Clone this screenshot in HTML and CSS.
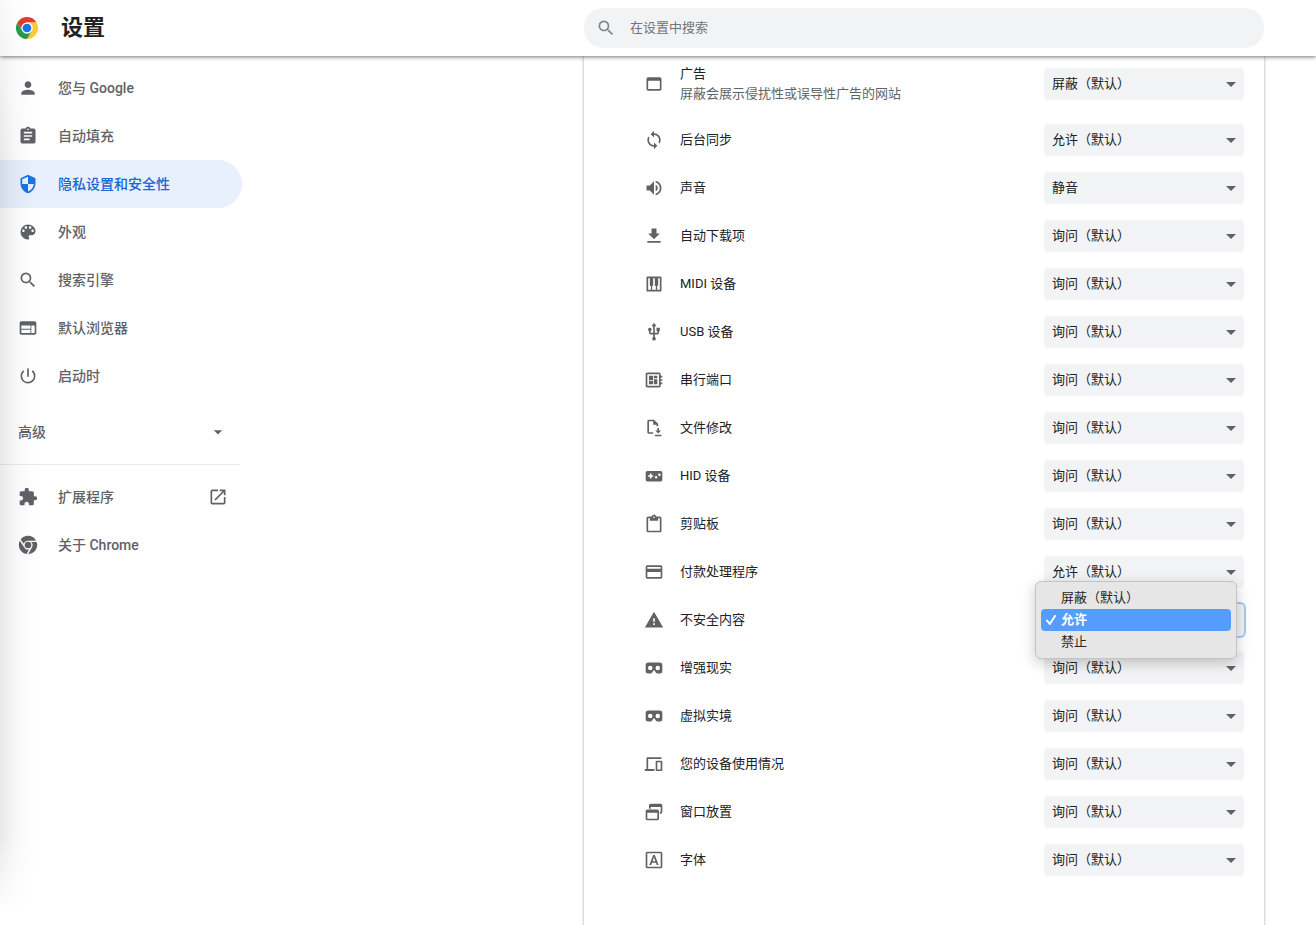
FILE: index.html
```html
<!DOCTYPE html>
<html lang="zh-CN">
<head>
<meta charset="utf-8">
<title>设置</title>
<link rel="stylesheet" href="styles.css">
</head>
<body>
<header class="toolbar">
  <div class="brand">
    <svg class="logo" viewBox="0 0 48 48" aria-hidden="true">
      <path fill="#e33b2e" d="M3.2 12A24 24 0 0 1 44.8 12H24a12 12 0 0 0-10.4 18z"/>
      <path fill="#fcc934" d="M44.8 12A24 24 0 0 1 24 48l10.4-18A12 12 0 0 0 24 12z"/>
      <path fill="#2a9a48" d="M24 48A24 24 0 0 1 3.2 12l10.4 18A12 12 0 0 0 34.4 30z"/>
      <circle cx="24" cy="24" r="12" fill="#fff"/>
      <circle cx="24" cy="24" r="9.5" fill="#1a73e8"/>
    </svg>
    <h1 class="title">设置</h1>
  </div>
  <label class="search">
    <svg class="icon" viewBox="0 0 24 24" aria-hidden="true"><path d="M15.5 14h-.79l-.28-.27A6.47 6.47 0 0 0 16 9.5 6.5 6.5 0 1 0 9.5 16c1.61 0 3.09-.59 4.23-1.57l.27.28v.79l5 4.99L20.49 19l-4.99-5zm-6 0C7.01 14 5 11.99 5 9.5S7.01 5 9.5 5 14 7.01 14 9.5 11.99 14 9.5 14z"/></svg>
    <input class="search-input" type="search" placeholder="在设置中搜索" aria-label="在设置中搜索">
  </label>
</header>

<div class="layout">
  <nav class="sidebar" aria-label="设置">
    <a class="nav-item" href="#people"><svg class="icon" viewBox="0 0 24 24"><path d="M12 12c2.21 0 4-1.79 4-4s-1.79-4-4-4-4 1.79-4 4 1.79 4 4 4zm0 2c-2.67 0-8 1.34-8 4v2h16v-2c0-2.66-5.33-4-8-4z"/></svg>您与 Google</a>
    <a class="nav-item" href="#autofill"><svg class="icon" viewBox="0 0 24 24"><path d="M19 3h-4.18C14.4 1.84 13.3 1 12 1c-1.3 0-2.4.84-2.82 2H5c-1.1 0-2 .9-2 2v14c0 1.1.9 2 2 2h14c1.1 0 2-.9 2-2V5c0-1.1-.9-2-2-2zm-7 0c.55 0 1 .45 1 1s-.45 1-1 1-1-.45-1-1 .45-1 1-1zm2 14H7v-2h7v2zm3-4H7v-2h10v2zm0-4H7V7h10v2z"/></svg>自动填充</a>
    <a class="nav-item selected" href="#privacy" aria-current="page"><svg class="icon" viewBox="0 0 24 24"><path d="M12 1L3 5v6c0 5.55 3.84 10.74 9 12 5.16-1.26 9-6.45 9-12V5l-9-4zm0 10.99h7c-.53 4.12-3.28 7.79-7 8.94V12H5V6.3l7-3.11v8.8z"/></svg>隐私设置和安全性</a>
    <a class="nav-item" href="#appearance"><svg class="icon" viewBox="0 0 24 24"><path d="M12 3a9 9 0 0 0 0 18c.83 0 1.5-.67 1.5-1.5 0-.39-.15-.74-.39-1.01-.23-.26-.38-.61-.38-.99 0-.83.67-1.5 1.5-1.5H16c2.76 0 5-2.24 5-5 0-4.42-4.03-8-9-8zm-5.5 9c-.83 0-1.5-.67-1.5-1.5S5.67 9 6.500 9 8 9.670 8 10.500 7.330 12 6.500 12zm3-4C8.670 8 8 7.330 8 6.500S8.670 5 9.500 5s1.500.67 1.500 1.500S10.330 8 9.500 8zm5 0c-.83 0-1.500-.67-1.500-1.500S13.670 5 14.500 5s1.500.67 1.500 1.500S15.330 8 14.500 8zm3 4c-.83 0-1.500-.67-1.500-1.500S16.670 9 17.500 9s1.500.67 1.500 1.500-.67 1.500-1.500 1.500z"/></svg>外观</a>
    <a class="nav-item" href="#search"><svg class="icon" viewBox="0 0 24 24"><path d="M15.5 14h-.79l-.28-.27A6.47 6.47 0 0 0 16 9.5 6.5 6.5 0 1 0 9.5 16c1.61 0 3.09-.59 4.23-1.57l.27.28v.79l5 4.99L20.49 19l-4.99-5zm-6 0C7.01 14 5 11.99 5 9.5S7.01 5 9.5 5 14 7.01 14 9.5 11.99 14 9.5 14z"/></svg>搜索引擎</a>
    <a class="nav-item" href="#browser"><svg class="icon" viewBox="0 0 24 24"><path d="M20 4H4c-1.100 0-1.990.9-1.990 2L2 18c0 1.100.9 2 2 2h16c1.100 0 2-.9 2-2V6c0-1.100-.9-2-2-2zm-5 14H4v-4h11v4zm0-5H4V9h11v4zm5 5h-4V9h4v9z"/></svg>默认浏览器</a>
    <a class="nav-item" href="#startup"><svg class="icon" viewBox="0 0 24 24"><path d="M13 3h-2v10h2V3zm4.830 2.170l-1.420 1.420A6.920 6.920 0 0 1 19 12c0 3.870-3.130 7-7 7A6.995 6.995 0 0 1 7.580 6.580L6.170 5.170A8.932 8.932 0 0 0 3 12a9 9 0 0 0 18 0c0-2.740-1.230-5.180-3.170-6.830z"/></svg>启动时</a>
    <button class="advanced" type="button" aria-expanded="false">高级<svg class="icon" viewBox="0 0 24 24"><path d="M7 10l5 5 5-5z"/></svg></button>
    <hr class="divider">
    <a class="nav-item" href="#extensions"><svg class="icon" viewBox="0 0 24 24"><path d="M20.500 11H19V7c0-1.100-.9-2-2-2h-4V3.500a2.500 2.500 0 0 0-5 0V5H4c-1.100 0-1.990.9-1.990 2v3.800H3.500c1.490 0 2.700 1.210 2.700 2.700s-1.210 2.700-2.700 2.700H2V20c0 1.100.9 2 2 2h3.800v-1.500c0-1.490 1.210-2.700 2.700-2.700s2.700 1.210 2.700 2.700V22H17c1.100 0 2-.9 2-2v-4h1.500a2.500 2.500 0 0 0 0-5z"/></svg><span class="nav-label">扩展程序</span><svg class="icon" viewBox="0 0 24 24"><path d="M19 19H5V5h7V3H5a2 2 0 0 0-2 2v14a2 2 0 0 0 2 2h14c1.100 0 2-.9 2-2v-7h-2v7zM14 3v2h3.590l-9.830 9.830 1.410 1.410L19 6.410V10h2V3h-7z"/></svg></a>
    <a class="nav-item" href="#about"><svg class="icon" viewBox="0 0 24 24"><circle cx="12" cy="12" r="4"/><path d="M12 1a11 11 0 0 1 9.700 5.800H12a5.300 5.300 0 0 0-5.100 3.800L3.200 5.400A11 11 0 0 1 12 1zM2.200 7L6.900 14.200A5.300 5.300 0 0 0 13.400 17.200L10.300 22.900A11 11 0 0 1 2.200 7zM22.500 8.500A11 11 0 0 1 12.200 23L16.800 14.800A5.300 5.300 0 0 0 15.900 8.500z"/></svg>关于 Chrome</a>
  </nav>

  <main class="card">
    <div class="row row-ads">
      <svg class="icon" viewBox="0 0 24 24"><path d="M19 4H5a2 2 0 0 0-2 2v12a2 2 0 0 0 2 2h14c1.100 0 2-.9 2-2V6a2 2 0 0 0-2-2zm0 14H5V8h14v10z"/></svg>
      <label class="row-label" for="ads">广告<span class="sub">屏蔽会展示侵扰性或误导性广告的网站</span></label>
      <div class="picker"><select id="ads"><option>屏蔽（默认）</option><option>允许</option></select></div>
    </div>
    <div class="row">
      <svg class="icon" viewBox="0 0 24 24"><path d="M12 4V1L8 5l4 4V6c3.310 0 6 2.690 6 6 0 1.010-.25 1.970-.7 2.800l1.460 1.460A7.930 7.930 0 0 0 20 12c0-4.420-3.580-8-8-8zm0 14c-3.310 0-6-2.690-6-6 0-1.010.25-1.970.7-2.800L5.240 7.740A7.930 7.930 0 0 0 4 12c0 4.420 3.580 8 8 8v3l4-4-4-4v3z"/></svg>
      <label class="row-label" for="sync">后台同步</label>
      <div class="picker"><select id="sync"><option>允许（默认）</option><option>禁止</option></select></div>
    </div>
    <div class="row">
      <svg class="icon" viewBox="0 0 24 24"><path d="M3 9v6h4l5 5V4L7 9H3zm13.500 3A4.500 4.500 0 0 0 14 7.970v8.050c1.480-.73 2.500-2.250 2.500-4.020zM14 3.230v2.060c2.890.86 5 3.540 5 6.710s-2.110 5.850-5 6.710v2.060c4.010-.91 7-4.490 7-8.770s-2.990-7.860-7-8.770z"/></svg>
      <label class="row-label" for="sound">声音</label>
      <div class="picker"><select id="sound"><option>静音</option><option>允许（默认）</option></select></div>
    </div>
    <div class="row">
      <svg class="icon" viewBox="0 0 24 24"><path d="M19 9h-4V3H9v6H5l7 7 7-7zM4 18v2h16v-2H4z"/></svg>
      <label class="row-label" for="downloads">自动下载项</label>
      <div class="picker"><select id="downloads"><option>询问（默认）</option><option>禁止</option></select></div>
    </div>
    <div class="row">
      <svg class="icon" viewBox="0 0 24 24"><path d="M20 3H4a1 1 0 0 0-1 1v16a1 1 0 0 0 1 1h16a1 1 0 0 0 1-1V4a1 1 0 0 0-1-1zm-6 11.500h.25V19h-4.500v-4.500H10c.55 0 1-.45 1-1V5h2v8.500c0 .55.45 1 1 1zM5 5h2v8.500c0 .55.45 1 1 1h.25V19H5V5zm14 14h-3.250v-4.500H16c.55 0 1-.45 1-1V5h2v14z"/></svg>
      <label class="row-label" for="midi">MIDI 设备</label>
      <div class="picker"><select id="midi"><option>询问（默认）</option><option>禁止</option></select></div>
    </div>
    <div class="row">
      <svg class="icon" viewBox="0 0 24 24"><path d="M15 7v4h1v2h-3V5h2l-3-4-3 4h2v8H8v-2.070c.7-.37 1.200-1.080 1.200-1.930a2.200 2.200 0 0 0-4.400 0c0 .85.5 1.560 1.200 1.930V13a2 2 0 0 0 2 2h3v3.050c-.71.37-1.200 1.100-1.200 1.950a2.200 2.200 0 0 0 4.400 0c0-.85-.49-1.580-1.200-1.950V15h3a2 2 0 0 0 2-2v-2h1V7h-4z"/></svg>
      <label class="row-label" for="usb">USB 设备</label>
      <div class="picker"><select id="usb"><option>询问（默认）</option><option>禁止</option></select></div>
    </div>
    <div class="row">
      <svg class="icon" viewBox="0 0 24 24"><path d="M22 9V7h-2V5c0-1.100-.9-2-2-2H4c-1.100 0-2 .9-2 2v14c0 1.100.9 2 2 2h14c1.100 0 2-.9 2-2v-2h2v-2h-2v-2h2v-2h-2V9h2zm-4 10H4V5h14v14zM6 13h5v4H6v-4zm6-6h4v3h-4V7zM6 7h5v5H6V7zm6 4h4v6h-4v-6z"/></svg>
      <label class="row-label" for="serial">串行端口</label>
      <div class="picker"><select id="serial"><option>询问（默认）</option><option>禁止</option></select></div>
    </div>
    <div class="row">
      <svg class="icon" viewBox="0 0 24 24"><path d="M11 19H6a2 2 0 0 1-2-2V4a2 2 0 0 1 2-2h6l5 5v3h-2V8h-4V4H6v13h5v2zM16 12h2v3h2.500L17 18.500 13.500 15H16v-3zM13 20h8v2h-8v-2z"/></svg>
      <label class="row-label" for="files">文件修改</label>
      <div class="picker"><select id="files"><option>询问（默认）</option><option>禁止</option></select></div>
    </div>
    <div class="row">
      <svg class="icon" viewBox="0 0 24 24"><path fill-rule="evenodd" d="M20 6H4a2 2 0 0 0-2 2v8.500a2 2 0 0 0 2 2h16a2 2 0 0 0 2-2V8a2 2 0 0 0-2-2zM7 9h2v2h2v2H9v2H7v-2H5v-2h2V9zm7.500 3a1.500 1.500 0 1 1 0 3 1.500 1.500 0 0 1 0-3zm4-3a1.500 1.500 0 1 1 0 3 1.500 1.500 0 0 1 0-3z"/></svg>
      <label class="row-label" for="hid">HID 设备</label>
      <div class="picker"><select id="hid"><option>询问（默认）</option><option>禁止</option></select></div>
    </div>
    <div class="row">
      <svg class="icon" viewBox="0 0 24 24"><path d="M19 3h-4.180C14.400 1.840 13.300 1 12 1s-2.400.84-2.820 2H5c-1.100 0-2 .9-2 2v15c0 1.100.9 2 2 2h14c1.100 0 2-.9 2-2V5c0-1.100-.9-2-2-2zm-7 0c.55 0 1 .45 1 1s-.45 1-1 1-1-.45-1-1 .45-1 1-1zm7 17H5V5h2v3h10V5h2v15z"/></svg>
      <label class="row-label" for="clipboard">剪贴板</label>
      <div class="picker"><select id="clipboard"><option>询问（默认）</option><option>禁止</option></select></div>
    </div>
    <div class="row">
      <svg class="icon" viewBox="0 0 24 24"><path d="M20 4H4c-1.110 0-1.990.89-1.990 2L2 18c0 1.110.89 2 2 2h16c1.110 0 2-.89 2-2V6c0-1.110-.89-2-2-2zm0 14H4v-6h16v6zm0-10H4V6h16v2z"/></svg>
      <label class="row-label" for="payment">付款处理程序</label>
      <div class="picker"><select id="payment"><option>允许（默认）</option><option>禁止</option></select></div>
    </div>
    <div class="row">
      <svg class="icon" viewBox="0 0 24 24"><path d="M1 21h22L12 2 1 21zm12-3h-2v-2h2v2zm0-4h-2v-4h2v4z"/></svg>
      <label class="row-label" for="insecure">不安全内容</label>
      <div class="picker open">
        <select id="insecure"><option>屏蔽（默认）</option><option selected>允许</option><option>禁止</option></select>
        <div class="menu" role="listbox" aria-label="不安全内容">
          <button class="option" type="button" role="option" aria-selected="false">屏蔽（默认）</button>
          <button class="option active" type="button" role="option" aria-selected="true"><svg class="check" viewBox="0 0 10 10" aria-hidden="true"><path d="M1 5.500L3.800 9 9 1"/></svg>允许</button>
          <button class="option" type="button" role="option" aria-selected="false">禁止</button>
        </div>
      </div>
    </div>
    <div class="row">
      <svg class="icon" viewBox="0 0 24 24"><path fill-rule="evenodd" d="M19 5.500H5a3 3 0 0 0-3 3v7a3 3 0 0 0 3 3h2.800c1.200 0 2-.6 2.500-1.700l.6-1.300c.4-.9 1.800-.9 2.200 0l.6 1.300c.5 1.100 1.300 1.700 2.500 1.700H19a3 3 0 0 0 3-3v-7a3 3 0 0 0-3-3zM7.500 14.700a2.700 2.700 0 1 1 0-5.400 2.700 2.700 0 0 1 0 5.400zm9 0a2.700 2.700 0 1 1 0-5.400 2.700 2.700 0 0 1 0 5.400z"/></svg>
      <label class="row-label" for="ar">增强现实</label>
      <div class="picker"><select id="ar"><option>询问（默认）</option><option>禁止</option></select></div>
    </div>
    <div class="row">
      <svg class="icon" viewBox="0 0 24 24"><path fill-rule="evenodd" d="M19 5.500H5a3 3 0 0 0-3 3v7a3 3 0 0 0 3 3h2.800c1.200 0 2-.6 2.500-1.700l.6-1.300c.4-.9 1.800-.9 2.200 0l.6 1.300c.5 1.100 1.300 1.700 2.500 1.700H19a3 3 0 0 0 3-3v-7a3 3 0 0 0-3-3zM7.500 14.700a2.700 2.700 0 1 1 0-5.400 2.700 2.700 0 0 1 0 5.400zm9 0a2.700 2.700 0 1 1 0-5.400 2.700 2.700 0 0 1 0 5.400z"/></svg>
      <label class="row-label" for="vr">虚拟实境</label>
      <div class="picker"><select id="vr"><option>询问（默认）</option><option>禁止</option></select></div>
    </div>
    <div class="row">
      <svg class="icon" viewBox="0 0 24 24"><path fill-rule="evenodd" d="M5 6v12h7.500v2.500H1V18h2V5a1 1 0 0 1 1-1h17v2H5zM15 8h6a1 1 0 0 1 1 1v10.500a1 1 0 0 1-1 1h-6a1 1 0 0 1-1-1V9a1 1 0 0 1 1-1zm1 2v8.500h4V10h-4z"/></svg>
      <label class="row-label" for="idle">您的设备使用情况</label>
      <div class="picker"><select id="idle"><option>询问（默认）</option><option>禁止</option></select></div>
    </div>
    <div class="row">
      <svg class="icon" viewBox="0 0 24 24"><path fill-rule="evenodd" d="M8 2h12a2 2 0 0 1 2 2v8a2 2 0 0 1-2 2h-1v-2h1V6H8v2H6V4a2 2 0 0 1 2-2zM4 9h12a2 2 0 0 1 2 2v9a2 2 0 0 1-2 2H4a2 2 0 0 1-2-2v-9a2 2 0 0 1 2-2zm0 4v7h12v-7H4z"/></svg>
      <label class="row-label" for="windows">窗口放置</label>
      <div class="picker"><select id="windows"><option>询问（默认）</option><option>禁止</option></select></div>
    </div>
    <div class="row">
      <svg class="icon" viewBox="0 0 24 24"><path fill-rule="evenodd" d="M4 2h16a2 2 0 0 1 2 2v16a2 2 0 0 1-2 2H4a2 2 0 0 1-2-2V4a2 2 0 0 1 2-2zm0 2v16h16V4H4zm7 2h2l4.600 12h-2.300l-1-2.700H9.700L8.700 18H6.400L11 6zm1 2.700l-1.600 4.700h3.200L12 8.700z"/></svg>
      <label class="row-label" for="fonts">字体</label>
      <div class="picker"><select id="fonts"><option>询问（默认）</option><option>禁止</option></select></div>
    </div>
  </main>
</div>
</body>
</html>
```
FILE: styles.css
```css
* {
  box-sizing: border-box;
}

body {
  margin: 0;
  min-height: 100vh;
  display: flex;
  flex-direction: column;
  background: #fff;
  color: #202124;
  font-family: Roboto, "Noto Sans CJK SC", sans-serif;
  font-size: 13px;
  line-height: 20px;
}

/* soft shade along the window's left edge */
body::after {
  content: "";
  position: fixed;
  inset: 0 auto 0 0;
  width: 36px;
  pointer-events: none;
  z-index: 5;
  background: linear-gradient(to right, rgba(0, 0, 0, .09), rgba(0, 0, 0, .03) 40%, transparent);
  mask-image: linear-gradient(to bottom, rgba(0, 0, 0, .3), #000 160px, #000 calc(100% - 90px), transparent calc(100% - 10px));
}

.icon {
  flex: none;
  width: 20px;
  height: 20px;
  fill: #5f6368;
}

.toolbar,
.layout {
  display: grid;
  grid-template-columns: minmax(242px, 1fr) minmax(0, 680px);
  padding-right: 52px;
}

.toolbar {
  position: sticky;
  top: 0;
  z-index: 2;
  height: 56px;
  align-items: center;
  background: #fff;
  box-shadow: 0 1px 4px rgba(0, 0, 0, .55);
}

.brand {
  display: flex;
  align-items: center;
  gap: 23px;
  padding-left: 16px;
}

.logo {
  width: 22px;
  height: 22px;
}

.title {
  margin: 0;
  font-size: 22px;
  line-height: 32px;
  font-weight: 700;
}

.search {
  display: flex;
  align-items: center;
  gap: 14px;
  height: 40px;
  padding: 0 20px 0 12px;
  border-radius: 20px;
  background: #f1f3f4;
}

.search .icon {
  fill: #80868b;
}

.search-input {
  flex: 1;
  min-width: 0;
  padding: 0;
  border: 0;
  outline: 0;
  background: none;
  color: #202124;
  font: inherit;
}

.search-input::placeholder {
  color: #757575;
}

.layout {
  flex: 1;
}

.sidebar {
  width: 242px;
  padding-top: 8px;
  color: #5f6368;
  font-size: 14px;
  font-weight: 500;
}

.nav-item {
  display: flex;
  align-items: center;
  gap: 20px;
  height: 48px;
  padding: 0 14px 0 18px;
  border-radius: 0 24px 24px 0;
  color: inherit;
  text-decoration: none;
}

.nav-item.selected {
  background: #e8f0fe;
  color: #1967d2;
}

.nav-item.selected .icon {
  fill: #1a73e8;
}

.nav-label {
  flex: 1;
}

.advanced {
  display: flex;
  align-items: center;
  justify-content: space-between;
  width: 100%;
  height: 48px;
  margin-top: 8px;
  padding: 0 14px 0 18px;
  border: 0;
  background: none;
  color: inherit;
  font: inherit;
}

.divider {
  height: 1px;
  margin: 8px 2px 8px 0;
  border: 0;
  background: #e8eaed;
}

.card {
  padding: 0 20px 40px 60px;
  box-shadow: 0 1px 2px rgba(60, 64, 67, .3), 0 1px 3px 1px rgba(60, 64, 67, .15);
}

.row {
  display: flex;
  align-items: center;
  gap: 16px;
  height: 48px;
}

.row-ads {
  height: 56px;
  margin-bottom: 4px;
}

.row-label {
  flex: 1;
}

.sub {
  display: block;
  color: #5f6368;
}

.picker {
  position: relative;
  flex: none;
  width: 200px;
}

.picker::after {
  content: "";
  position: absolute;
  top: 14px;
  right: 8px;
  border: 5px solid transparent;
  border-top-color: #5f6368;
  border-bottom: 0;
  pointer-events: none;
}

.picker select {
  appearance: none;
  display: block;
  width: 100%;
  height: 32px;
  padding: 0 24px 0 8px;
  border: 0;
  border-radius: 4px;
  outline: 0;
  background: #f1f3f4;
  color: #202124;
  font: inherit;
}

.picker.open select {
  box-shadow: 0 0 0 2px rgba(26, 115, 232, .4);
}

.menu {
  position: absolute;
  z-index: 1;
  top: -23px;
  left: -9px;
  width: 202px;
  padding: 5px;
  border: 1px solid #c4c4c4;
  border-radius: 6px;
  background: #e6e6e6;
  box-shadow: 0 4px 14px rgba(0, 0, 0, .22);
}

.option {
  position: relative;
  display: block;
  width: 100%;
  height: 22px;
  padding: 0 0 0 20px;
  border: 0;
  border-radius: 4px;
  background: none;
  color: #262626;
  font: inherit;
  text-align: left;
}

.option.active {
  background: #559dfd;
  color: #fff;
  font-weight: 700;
}

.check {
  position: absolute;
  top: 6px;
  left: 5px;
  width: 10px;
  height: 10px;
  fill: none;
  stroke: #fff;
  stroke-width: 2;
  stroke-linecap: round;
  stroke-linejoin: round;
}
```
